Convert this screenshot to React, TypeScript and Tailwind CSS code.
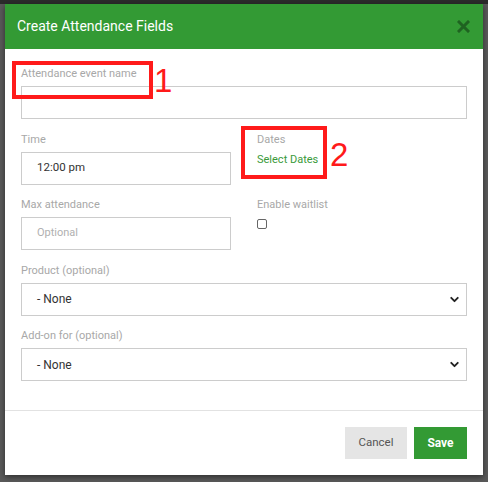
import { ChevronDown } from 'lucide-react';

const font = { fontFamily: 'Roboto, "Liberation Sans", sans-serif' };

function Label({ children }: { children: React.ReactNode }) {
  return <div className="text-[11px] leading-[16px] text-[#a8a8a8] mb-[4px]">{children}</div>;
}

function SelectBox() {
  return (
    <div className="h-[33px] border border-[#cccccc] flex items-center justify-between pl-[15px] pr-[5px] text-[12px] text-[#333]">
      <span>- None</span>
      <ChevronDown size={13} strokeWidth={3.5} className="text-[#222]" />
    </div>
  );
}

export default function App() {
  return (
    <div style={font} className="w-[488px] h-[482px] bg-[#5a5a5a] relative overflow-hidden">
      <div className="h-[4px] bg-[#2b2b2b]" />
      <div className="mx-[5px] bg-white shadow-[0_2px_6px_rgba(0,0,0,0.5)] relative">
        {/* header */}
        <div className="h-[45px] bg-[#339a34] flex items-center justify-between pl-[12px] pr-[13px]">
          <span className="text-white text-[14px]">Create Attendance Fields</span>
          <svg width="13" height="13" viewBox="0 0 13 13">
            <path d="M2 2 L11 11 M11 2 L2 11" stroke="#1f6321" strokeWidth="3" strokeLinecap="square" />
          </svg>
        </div>

        {/* body */}
        <div className="px-[16px] pt-[17px] pb-[29px]">
          <div className="mb-[12.5px]">
            <Label>Attendance event name</Label>
            <div className="h-[33px] border border-[#cccccc]" />
          </div>

          <div className="grid grid-cols-2 gap-x-[26px]">
            <div className="mb-[12.5px]">
              <Label>Time</Label>
              <div className="h-[33px] border border-[#cccccc] flex items-center pl-[15px] text-[11.5px] text-[#333]">
                12:00 pm
              </div>
            </div>
            <div>
              <Label>Dates</Label>
              <div className="text-[11px] leading-[16px] text-[#3a9a3a] mt-[1px]">Select Dates</div>
            </div>

            <div className="mb-[12.5px]">
              <Label>Max attendance</Label>
              <div className="h-[33px] border border-[#cccccc] flex items-center pl-[15px] text-[11px] text-[#b0b0b0]">
                Optional
              </div>
            </div>
            <div>
              <Label>Enable waitlist</Label>
              <div className="w-[10px] h-[10px] border border-[#666] rounded-[2px] mt-[6px]" />
            </div>
          </div>

          <div className="mb-[12.5px]">
            <Label>Product (optional)</Label>
            <SelectBox />
          </div>

          <div>
            <Label>Add-on for (optional)</Label>
            <SelectBox />
          </div>
        </div>

        {/* footer */}
        <div className="border-t border-[#e2e2e2] flex justify-end gap-[7px] px-[16px] pt-[16px] pb-[16px]">
          <button className="w-[62px] h-[32px] bg-[#e5e5e5] text-[#555] text-[11.5px]">Cancel</button>
          <button className="w-[53px] h-[32px] bg-[#339a34] text-white text-[12px] font-bold">Save</button>
        </div>

        {/* annotations */}
        <div className="absolute left-[7px] top-[57px] w-[141px] h-[38px] border-[4px] border-[#ff1a1a]" />
        <div className="absolute left-[149px] top-[57px] text-[33px] leading-[40px] text-[#ff1a1a]" style={{ fontFamily: '"Liberation Sans", sans-serif' }}>1</div>
        <div className="absolute left-[236px] top-[122px] w-[86px] h-[53px] border-[4px] border-[#ff1a1a]" />
        <div className="absolute left-[325px] top-[131px] text-[33px] leading-[40px] text-[#ff1a1a]" style={{ fontFamily: '"Liberation Sans", sans-serif' }}>2</div>
      </div>
    </div>
  );
}
